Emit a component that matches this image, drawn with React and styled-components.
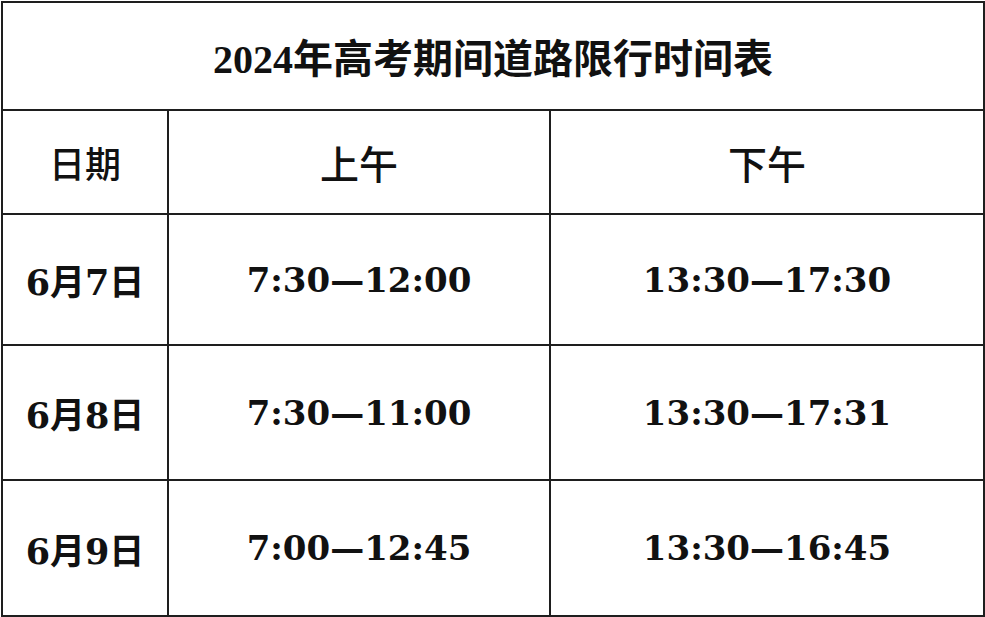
import React from 'react';
import styled, {createGlobalStyle} from 'styled-components';

const GlobalStyle = createGlobalStyle`
  html, body {
    margin: 0;
    padding: 0;
    background: #ffffff;
  }
  body {
    font-family: "Liberation Serif", "Noto Sans CJK SC", serif;
    color: #111;
  }
`;

const Page = styled.div`
  width: 985px;
  height: 617px;
  padding: 1px 0 0 1px;
  box-sizing: border-box;
  background: #fff;
`;

const Table = styled.table`
  width: 982px;
  border-collapse: collapse;
  table-layout: fixed;
  td {
    border: 2px solid #1e1e1e;
    text-align: center;
    vertical-align: middle;
    padding: 0;
  }
`;

const TitleCell = styled.td`
  height: 106px;
  font-size: 40px;
  font-weight: 700;
`;

const HeadCell = styled.td`
  height: 102px;
  font-family: "Noto Sans CJK SC", sans-serif;
  font-size: ${p => (p.$wide ? 39 : 36)}px;
  font-weight: 500;
`;

const DateCell = styled.td`
  height: ${p => p.$h}px;
  font-family: "DejaVu Serif", "Noto Sans CJK SC", serif;
  font-size: 35px;
  font-weight: 700;
`;

const TimeCell = styled.td`
  font-family: "DejaVu Serif", serif;
  font-size: 34px;
  font-weight: 700;
`;

const rows = [
    {date: '6月7日', am: '7:30—12:00', pm: '13:30—17:30', h: 129},
    {date: '6月8日', am: '7:30—11:00', pm: '13:30—17:31', h: 133},
    {date: '6月9日', am: '7:00—12:45', pm: '13:30—16:45', h: 134},
];

export default function App() {
    return (
        <Page>
            <GlobalStyle/>
            <Table>
                <colgroup>
                    <col style={{width: 166}}/>
                    <col style={{width: 382}}/>
                    <col style={{width: 434}}/>
                </colgroup>
                <tbody>
                <tr>
                    <TitleCell colSpan={3}>2024年高考期间道路限行时间表</TitleCell>
                </tr>
                <tr>
                    <HeadCell>日期</HeadCell>
                    <HeadCell $wide>上午</HeadCell>
                    <HeadCell $wide>下午</HeadCell>
                </tr>
                {rows.map(r => (
                    <tr key={r.date}>
                        <DateCell $h={r.h}>{r.date}</DateCell>
                        <TimeCell>{r.am}</TimeCell>
                        <TimeCell>{r.pm}</TimeCell>
                    </tr>
                ))}
                </tbody>
            </Table>
        </Page>
    );
}
